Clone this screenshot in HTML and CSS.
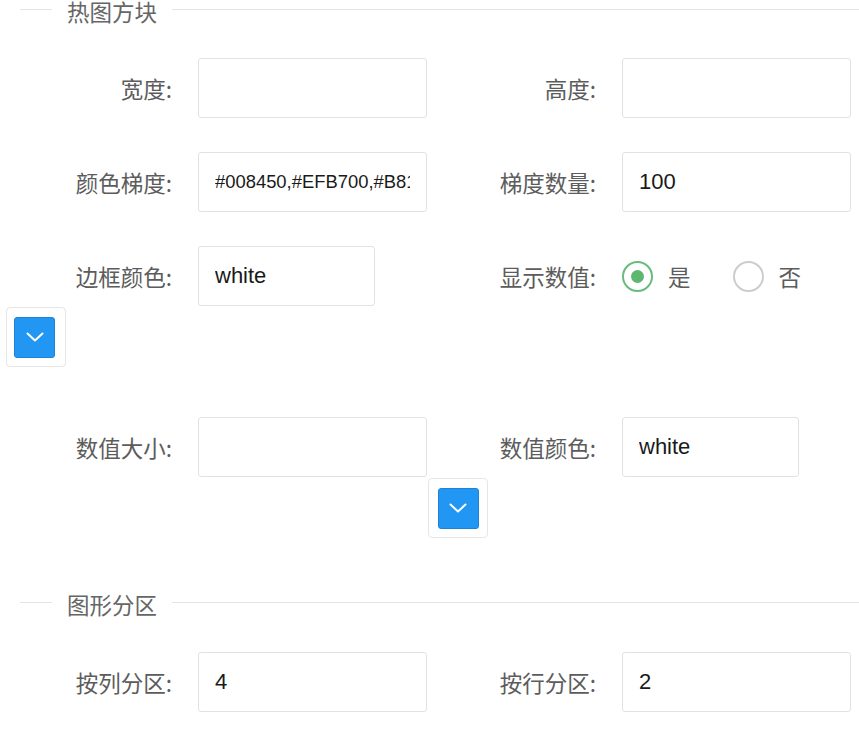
FILE: index.html
```html
<!DOCTYPE html>
<html lang="zh-CN">
<head>
<meta charset="utf-8">
<title>热图方块</title>
<link rel="stylesheet" href="styles.css">
</head>
<body>
<div class="page">
  <div class="divider divider-top"><span class="divider-text">热图方块</span></div>
  <div class="form">
    <div class="item">
      <div class="line"><span class="label">宽度:</span><input class="input" type="text" value=""></div>
    </div>
    <div class="item">
      <div class="line"><span class="label">高度:</span><input class="input" type="text" value=""></div>
    </div>
    <div class="item">
      <div class="line"><span class="label">颜色梯度:</span><input class="input input-long" type="text" value="#008450,#EFB700,#B81D13"></div>
    </div>
    <div class="item">
      <div class="line"><span class="label">梯度数量:</span><input class="input" type="text" value="100"></div>
    </div>
    <div class="item item-gap">
      <div class="line"><span class="label">边框颜色:</span><input class="input input-narrow" type="text" value="white"></div>
      <div class="picker picker-start">
        <span class="picker-btn"><svg width="18" height="10" viewBox="0 0 18 10"><polyline points="1.5,1.5 9,8.5 16.5,1.5" fill="none" stroke="#fff" stroke-width="2" stroke-linecap="round" stroke-linejoin="round"/></svg></span>
      </div>
    </div>
    <div class="item item-gap">
      <div class="line"><span class="label">显示数值:</span>
        <div class="radios">
          <span class="radio"><span class="radio-circle checked"></span><span class="radio-text">是</span></span>
          <span class="radio"><span class="radio-circle"></span><span class="radio-text">否</span></span>
        </div>
      </div>
    </div>
    <div class="item">
      <div class="line"><span class="label">数值大小:</span><input class="input" type="text" value=""></div>
      <div class="picker picker-after">
        <span class="picker-btn"><svg width="18" height="10" viewBox="0 0 18 10"><polyline points="1.5,1.5 9,8.5 16.5,1.5" fill="none" stroke="#fff" stroke-width="2" stroke-linecap="round" stroke-linejoin="round"/></svg></span>
      </div>
    </div>
    <div class="item">
      <div class="line"><span class="label">数值颜色:</span><input class="input input-narrow" type="text" value="white"></div>
    </div>
  </div>

  <div class="divider divider-second"><span class="divider-text">图形分区</span></div>
  <div class="form form-second">
    <div class="item">
      <div class="line"><span class="label">按列分区:</span><input class="input" type="text" value="4"></div>
    </div>
    <div class="item">
      <div class="line"><span class="label">按行分区:</span><input class="input" type="text" value="2"></div>
    </div>
  </div>
</div>
</body>
</html>
```

FILE: styles.css
```css
html, body {
  margin: 0;
  padding: 0;
  background: #ffffff;
}

.page {
  width: 859px;
  font-family: "Noto Sans CJK SC", "Microsoft YaHei", sans-serif;
  color: #5c5c5c;
  font-size: 22.5px;
}

.divider {
  display: flex;
  align-items: center;
  padding-left: 20px;
}

.divider::before,
.divider::after {
  content: "";
  border-top: 1px solid #e4e4e4;
}

.divider::before {
  width: 32px;
}

.divider::after {
  flex: 1;
}

.divider-top {
  height: 24px;
}

.divider-top .divider-text {
  line-height: 22px;
  margin-bottom: 3px;
}

.divider-top::before,
.divider-top::after {
  margin-bottom: 6px;
}

.divider-second {
  height: 24px;
  margin-top: 54px;
}

.divider-second::before,
.divider-second::after {
  margin-bottom: 4px;
}

.divider-text {
  padding: 0 15px;
  line-height: 24px;
  color: #666666;
  white-space: nowrap;
}

.form {
  display: grid;
  grid-template-columns: 424px 1fr;
  row-gap: 34px;
  margin-top: 34px;
  align-items: start;
}

.form-second {
  margin-top: 36px;
}

.item-gap {
  margin-bottom: 16px;
}

.line {
  display: flex;
  align-items: center;
  height: 60px;
}

.label {
  flex-shrink: 0;
  width: 198px;
  box-sizing: border-box;
  padding-right: 26px;
  text-align: right;
  white-space: nowrap;
  color: #5c5c5c;
}

.input {
  flex-shrink: 0;
  box-sizing: border-box;
  width: 229px;
  height: 60px;
  border: 1px solid #e2e2e2;
  border-radius: 3px;
  padding: 0 16px;
  font-family: "Liberation Sans", Arial, sans-serif;
  font-size: 22px;
  color: #1a1a1a;
  background: #fff;
  outline: none;
  margin: 0;
}

.input-long {
  font-size: 18.4px;
}

.input-narrow {
  width: 177px;
}

.picker {
  box-sizing: border-box;
  width: 60px;
  height: 60px;
  border: 1px solid #e6e6e6;
  border-radius: 4px;
  display: flex;
  align-items: center;
  justify-content: center;
  margin-top: 1px;
}

.picker-start {
  margin-left: 6px;
  justify-content: flex-start;
  padding-left: 7px;
}

.picker-after {
  margin-left: 428px;
}

.picker-btn {
  box-sizing: border-box;
  width: 41px;
  height: 41px;
  background: #2196f3;
  border: 1px solid #1b84d8;
  border-radius: 3px;
  display: flex;
  align-items: center;
  justify-content: center;
}

.picker-btn svg {
  display: block;
}

.radios {
  display: flex;
  align-items: center;
}

.radio {
  display: flex;
  align-items: center;
  margin-right: 42px;
}

.radio-circle {
  box-sizing: border-box;
  width: 31px;
  height: 31px;
  border-radius: 50%;
  border: 2px solid #cccccc;
  display: flex;
  align-items: center;
  justify-content: center;
}

.radio-circle.checked {
  border-color: #67bc7d;
}

.radio-circle.checked::after {
  content: "";
  width: 13px;
  height: 13px;
  border-radius: 50%;
  background: #5cb870;
}

.radio-text {
  margin-left: 15px;
  color: #5c5c5c;
}
```
